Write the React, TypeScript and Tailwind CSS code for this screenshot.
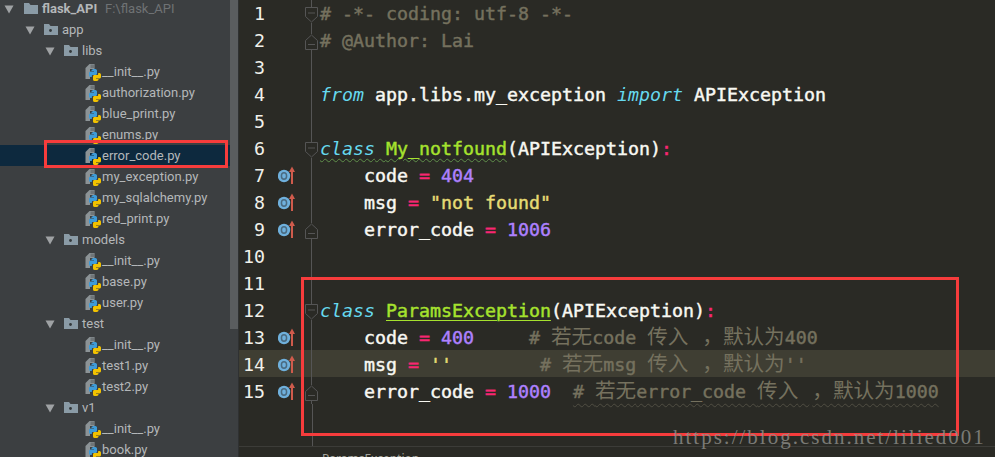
import type { ReactNode } from "react";

type TreeRow = { name: string; kind: "folder" | "file"; indent: string; selected?: boolean };

const treeRows: TreeRow[] = [
  { name: "app", kind: "folder", indent: "pl-[25px]" },
  { name: "libs", kind: "folder", indent: "pl-[45px]" },
  { name: "__init__.py", kind: "file", indent: "pl-[85px]" },
  { name: "authorization.py", kind: "file", indent: "pl-[85px]" },
  { name: "blue_print.py", kind: "file", indent: "pl-[85px]" },
  { name: "enums.py", kind: "file", indent: "pl-[85px]" },
  { name: "error_code.py", kind: "file", indent: "pl-[85px]", selected: true },
  { name: "my_exception.py", kind: "file", indent: "pl-[85px]" },
  { name: "my_sqlalchemy.py", kind: "file", indent: "pl-[85px]" },
  { name: "red_print.py", kind: "file", indent: "pl-[85px]" },
  { name: "models", kind: "folder", indent: "pl-[45px]" },
  { name: "__init__.py", kind: "file", indent: "pl-[85px]" },
  { name: "base.py", kind: "file", indent: "pl-[85px]" },
  { name: "user.py", kind: "file", indent: "pl-[85px]" },
  { name: "test", kind: "folder", indent: "pl-[45px]" },
  { name: "__init__.py", kind: "file", indent: "pl-[85px]" },
  { name: "test1.py", kind: "file", indent: "pl-[85px]" },
  { name: "test2.py", kind: "file", indent: "pl-[85px]" },
  { name: "v1", kind: "folder", indent: "pl-[45px]" },
  { name: "__init__.py", kind: "file", indent: "pl-[85px]" },
  { name: "book.py", kind: "file", indent: "pl-[85px]" },
];

function Arrow() {
  return (
    <svg width="10" height="10" viewBox="0 0 10 10" className="shrink-0">
      <path d="M0.5 1.5H9.5L5 9.5Z" fill="#9fa2a4" />
    </svg>
  );
}

function FolderIcon({ dot = true }: { dot?: boolean }) {
  return (
    <svg width="14" height="13" viewBox="0 0 14 13" className="shrink-0">
      <path d="M0 1H5L6.5 3H14V12H0Z" fill="#8a9ba6" />
      {dot && <circle cx="6.5" cy="7.5" r="1.4" fill="#33383b" />}
    </svg>
  );
}

const pyHalf =
  "M4 12V10C4 9 5 8.5 6 8.5H9V8H6.5V7.5C6.5 6.5 8 6 9.5 6S12 6.5 12 7.5V10.5C12 11.3 11.3 12 10.5 12H8C7 12 6.8 12.5 6.8 13.5V14H5.5C4.5 14 4 13 4 12Z";

function PyIcon() {
  return (
    <svg width="16" height="18" viewBox="0 0 16 18" className="shrink-0">
      <path d="M0.5 5L4.5 1H9.5V6H5V16H0.5Z" fill="#8c9396" />
      <path d="M5.5 1.5V5H9V1.5Z" fill="#6f7578" />
      <path d={pyHalf} fill="#3e9bd8" />
      <path d={pyHalf} fill="#f2c200" transform="rotate(180 10 12)" />
    </svg>
  );
}

function Sidebar() {
  return (
    <aside className="relative w-[239px] shrink-0 overflow-hidden border-r border-[#2f3132] bg-[#3c3f41] font-['Roboto',sans-serif] text-[13px] text-[#b4b7b9]">
      <div className="-mt-[2px]">
        <div className="flex h-[21px] items-center pl-[4px]">
          <Arrow />
          <span className="ml-[10px] mr-[4px]"><FolderIcon dot={false} /></span>
          <span className="w-[63px] font-bold">flask_API</span>
          <span className="text-[#6f7274]">F:\flask_API</span>
        </div>
        {treeRows.map((row, i) => (
          <div
            key={i}
            className={`flex h-[21px] items-center ${row.indent} ${row.selected ? "bg-[#0d293e]" : ""}`}
          >
            {row.kind === "folder" ? (
              <>
                <Arrow />
                <span className="ml-[9px] mr-[4px]"><FolderIcon /></span>
              </>
            ) : (
              <span className="mr-[1px]"><PyIcon /></span>
            )}
            <span>{row.name}</span>
          </div>
        ))}
      </div>
      <div className="absolute right-0 top-0 h-[329px] w-[8px] bg-[#5a5d5f]" />
    </aside>
  );
}

function OverrideMark() {
  return (
    <svg width="20" height="20" viewBox="0 0 20 20">
      <circle cx="6" cy="11" r="6.2" fill="#6fb0dc" />
      <ellipse cx="6" cy="11" rx="2.6" ry="3.2" fill="none" stroke="#4a6a80" strokeWidth="1.5" />
      <path d="M14 19V4" stroke="#cf5b4c" strokeWidth="2" />
      <path d="M11 7L14 1.5L17 7Z" fill="#cf5b4c" />
    </svg>
  );
}

function FoldMark({ dir }: { dir: "start" | "end" }) {
  return (
    <svg width="13" height="16" viewBox="0 0 13 16" className="absolute -right-[7px] top-[8px] bg-[#2a2a25]">
      {dir === "start" ? (
        <path d="M0.5 0.5H12.5V9.5L6.5 15L0.5 9.5Z" fill="#2a2a25" stroke="#555" />
      ) : (
        <path d="M0.5 15.5H12.5V6.5L6.5 1L0.5 6.5Z" fill="#2a2a25" stroke="#555" />
      )}
      <path d={dir === "start" ? "M3 6H10" : "M3 10.5H10"} stroke="#555" />
    </svg>
  );
}

function Cm({ children }: { children: ReactNode }) {
  return <span className="text-[#75715e]">{children}</span>;
}
function Kw({ children }: { children: ReactNode }) {
  return <span className="italic text-[#66d9ef] [-webkit-text-stroke:0px]">{children}</span>;
}
function Op({ children }: { children: ReactNode }) {
  return <span className="text-[#f92672]">{children}</span>;
}
function Num({ children }: { children: ReactNode }) {
  return <span className="text-[#ae81ff]">{children}</span>;
}
function Zh({ children }: { children: ReactNode }) {
  return <span className="font-['Noto_Sans_CJK_SC',sans-serif] text-[20.6px] leading-none [-webkit-text-stroke:0px]">{children}</span>;
}
function ZhTail({ children }: { children: ReactNode }) {
  return <span className="ml-[3px] font-['Noto_Sans_CJK_SC',sans-serif] text-[20.6px] leading-none [-webkit-text-stroke:0px]">{children}</span>;
}

type CodeLine = { code?: ReactNode; mark?: boolean; fold?: "start" | "end"; current?: boolean };

const codeLines: CodeLine[] = [
  { code: <Cm># -*- coding: utf-8 -*-</Cm>, fold: "start" },
  { code: <Cm># @Author: Lai</Cm>, fold: "end" },
  {},
  { code: <><Kw>from</Kw> app.libs.my_exception <Kw>import</Kw> APIException</> },
  {},
  {
    code: (
      <>
        <span className="underline decoration-wavy decoration-[#5f8f4a] decoration-1 underline-offset-[3px]">
          <Kw>class</Kw>{" "}
          <span className="text-[#a6e22e]">My_notfound</span>
        </span>
        (APIException)<Op>:</Op>
      </>
    ),
    fold: "start",
  },
  { code: <>{"    code "}<Op>=</Op> <Num>404</Num></>, mark: true },
  { code: <>{"    msg "}<Op>=</Op> <span className="text-[#e6db74]">"not found"</span></>, mark: true },
  { code: <>{"    error_code "}<Op>=</Op> <Num>1006</Num></>, mark: true, fold: "end" },
  {},
  {},
  {
    code: (
      <>
        <Kw>class</Kw>{" "}
        <span className="text-[#a6e22e] underline decoration-[#a6e22e] decoration-1 underline-offset-[3px]">ParamsException</span>
        (APIException)<Op>:</Op>
      </>
    ),
    fold: "start",
  },
  {
    code: (
      <>
        {"    code "}<Op>=</Op> <Num>400</Num>{"     "}
        <Cm># <Zh>若无</Zh>code <Zh>传入</Zh> <ZhTail>，默认为</ZhTail>400</Cm>
      </>
    ),
    mark: true,
  },
  {
    code: (
      <>
        {"    msg "}<Op>=</Op> <span className="text-[#e6db74]">''</span>{"        "}
        <Cm># <Zh>若无</Zh>msg <Zh>传入</Zh> <ZhTail>，默认为</ZhTail>''</Cm>
      </>
    ),
    mark: true,
    current: true,
  },
  {
    code: (
      <>
        {"    error_code "}<Op>=</Op> <Num>1000</Num>{"  "}
        <span className="underline decoration-wavy decoration-[#4f4d42] decoration-1 underline-offset-[5px]">
          <Cm># <Zh>若无</Zh>error_code <Zh>传入</Zh> <ZhTail>，默认为</ZhTail>1000</Cm>
        </span>
      </>
    ),
    mark: true,
    fold: "end",
  },
];

function Editor() {
  return (
    <main className="flex min-w-0 flex-1 flex-col overflow-hidden bg-[#2a2a25] font-['DejaVu_Sans_Mono',monospace] text-[18.27px] text-[#f8f8f2]">
      <div className="-mt-[1px] flex flex-1 flex-col">
        {codeLines.map((line, i) => (
          <div key={i} className={`flex h-[27px] shrink-0 items-center ${line.current ? "bg-[#3f3e33]" : ""}`}>
            <span className="w-[26px] shrink-0 pt-[2px] text-right text-[#f0f0ea]">{i + 1}</span>
            <div className="relative flex h-full w-[47px] shrink-0 items-center border-r border-[#555] pl-[13px]">
              {line.mark && <OverrideMark />}
              {line.fold && <FoldMark dir={line.fold} />}
            </div>
            <pre className="pl-[8px] pt-[2px] font-['DejaVu_Sans_Mono',monospace] [-webkit-text-stroke:0.45px]">{line.code}</pre>
          </div>
        ))}
        <div className="flex-1">
          <div className="ml-[73px] h-full border-l border-[#555]" />
        </div>
      </div>
      <div className="h-[11px] shrink-0 overflow-hidden border-t border-[#3c3c38] pl-[83px] font-['Noto_Sans',sans-serif] text-[12px] leading-[24px] text-[#a5a59c]">
        ParamsException
      </div>
    </main>
  );
}

export default function App() {
  return (
    <div className="relative flex h-[457px] w-[995px] overflow-hidden">
      <Sidebar />
      <Editor />
      {/* annotations drawn over the screenshot */}
      <div className="absolute left-[44px] top-[140px] h-[28px] w-[184px] border-[3px] border-[#f63c3c]" />
      <div className="absolute left-[301px] top-[277px] h-[159px] w-[658px] border-[3px] border-[#f63c3c]" />
      <div className="absolute left-[673px] top-[422px] font-['Liberation_Serif',serif] text-[21px] tracking-[2px] text-[#8f8f8a] opacity-80">
        https://blog.csdn.net/lilied001
      </div>
    </div>
  );
}
